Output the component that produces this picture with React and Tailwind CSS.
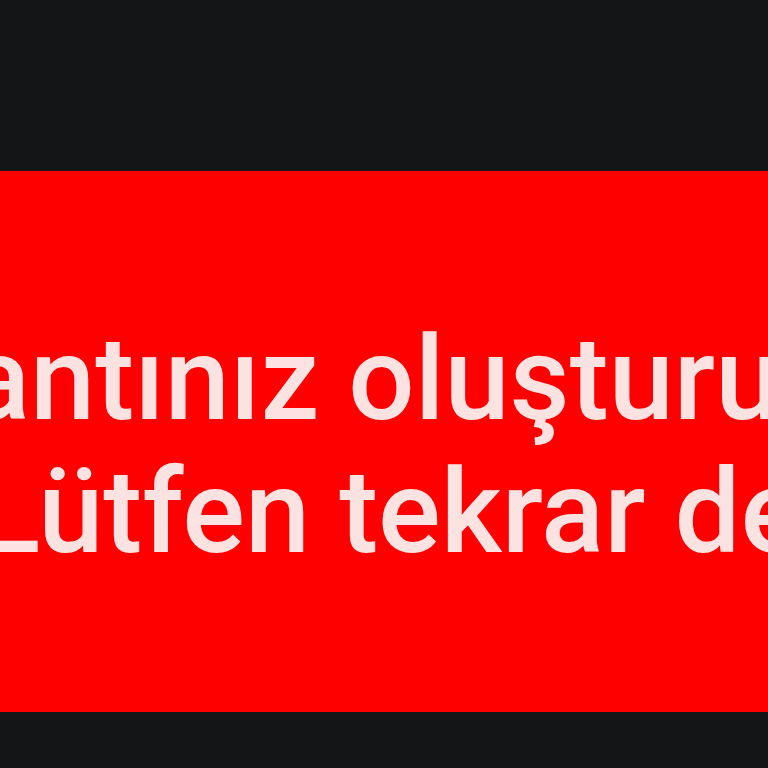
export default function App() {
  return (
    <div className="w-[768px] h-[768px] overflow-hidden bg-[#131517] flex flex-col" style={{ fontFamily: 'Roboto, "Noto Sans", sans-serif' }}>
      <div className="h-[171px] shrink-0" />
      <div className="h-[541px] shrink-0 bg-[#fe0000] overflow-hidden pt-[142px]">
        <div className="flex whitespace-nowrap text-[117px] leading-[133px] font-medium text-[#fde2e2] ml-[-33px]">
          <span className="w-0 shrink-0 flex justify-end">Bağl</span>
          <span>antınız oluşturulamadı.</span>
        </div>
        <div className="flex whitespace-nowrap text-[117px] leading-[133px] font-medium text-[#fde2e2] ml-[-23px]">
          <span>Lütfen tekrar deneyin.</span>
        </div>
      </div>
      <div className="flex-1" />
    </div>
  )
}
